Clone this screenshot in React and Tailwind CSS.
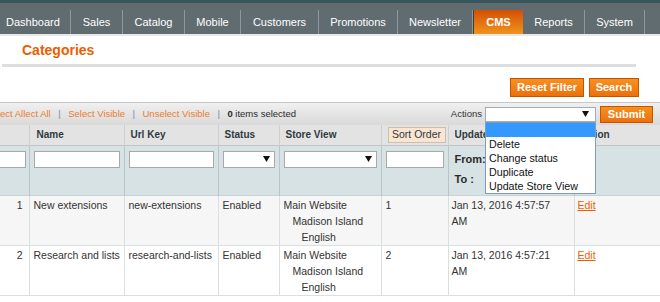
import React from 'react';

const navItems = [
  { label: 'Dashboard', w: 'w-[71px] justify-start pl-[6px] border-r' },
  { label: 'Sales', w: 'w-[52px] justify-center border-r' },
  { label: 'Catalog', w: 'w-[62px] justify-center border-r' },
  { label: 'Mobile', w: 'w-[56px] justify-center border-r' },
  { label: 'Customers', w: 'w-[78px] justify-center border-r' },
  { label: 'Promotions', w: 'w-[79px] justify-center border-r' },
  { label: 'Newsletter', w: 'w-[75px] justify-center border-r' },
  { label: 'CMS', w: 'w-[50px] justify-center', active: true },
  { label: 'Reports', w: 'w-[62px] justify-center border-r' },
  { label: 'System', w: 'w-[60px] justify-center border-r' },
];

const rows = [
  { id: 1, name: 'New extensions', key: 'new-extensions', sort: 1, date: 'Jan 13, 2016 4:57:57' },
  { id: 2, name: 'Research and lists', key: 'research-and-lists', sort: 2, date: 'Jan 13, 2016 4:57:21' },
];

const Arrow = () => (
  <svg width="7" height="6" viewBox="0 0 7 6" className="shrink-0">
    <path d="M0 0h7L3.5 6z" fill="#111" />
  </svg>
);

const FakeSelect = ({ className = '' }) => (
  <div className={`flex h-[17px] items-center justify-end border border-[#a9a9a9] bg-white pr-[4px] ${className}`}>
    <Arrow />
  </div>
);

const Sep = () => <span className="mx-[7.5px] text-[#6f8ea0]">|</span>;

const App = () => {
  return (
    <div className="relative h-[302px] w-[660px] overflow-hidden bg-white font-['Liberation_Sans',Arial,sans-serif]">
      {/* top nav */}
      <div className="h-[3px] bg-[#38555a]" />
      <div className="flex h-[31px] bg-[#616c71] pt-[7px]">
        {navItems.map((item) => (
          <div
            key={item.label}
            className={`flex h-[24px] items-center border-[#8e989c] text-[11px] text-white ${item.w} ${
              item.active
                ? 'bg-gradient-to-b from-[#d24e04] to-[#f1931c] font-bold border-l border-l-[#3d3d3d]'
                : ''
            }`}
          >
            {item.label}
          </div>
        ))}
      </div>
      <div className="h-[2px] bg-[#e8e8e8]" />

      {/* title */}
      <div className="flex h-[28px] items-center pl-[22px] text-[14px] font-bold text-[#eb5e00]">
        Categories
      </div>
      <div className="ml-[2px] h-[3px] w-[634px] bg-[#dedede]" />

      {/* filter buttons */}
      <div className="flex h-[35px] justify-end gap-[5px] pr-[21px] pt-[11px]">
        <button className="flex h-[19px] w-[74px] items-center justify-center border border-[#c65400] bg-gradient-to-b from-[#f5911f] to-[#ec700c] text-[11px] font-bold text-white">
          Reset Filter
        </button>
        <button className="flex h-[19px] w-[50px] items-center justify-center border border-[#c65400] bg-gradient-to-b from-[#f5911f] to-[#ec700c] text-[11px] font-bold text-white">
          Search
        </button>
      </div>

      {/* massaction toolbar */}
      <div className="flex h-[23px] items-center whitespace-nowrap border-t border-[#c8c8c8] bg-gradient-to-b from-[#f0f0f0] to-[#d9d9d9] text-[9.5px]">
        <div className="flex items-center text-[#ee7b2c]">
          <span>ect Allect All</span>
          <Sep />
          <span>Select Visible</span>
          <Sep />
          <span>Unselect Visible</span>
          <Sep />
          <span className="text-[#2b2b2b]">
            <b>0</b> items selected
          </span>
        </div>
        <div className="ml-auto flex items-center pr-[7px]">
          <span className="mr-[3px] text-[#333]">Actions</span>
          <div className="relative w-[111px]">
            <div className="flex h-[15px] items-center justify-end border border-[#a5acb2] bg-white pr-[6px]">
              <Arrow />
            </div>
            <div className="absolute left-0 top-full z-10 w-full border border-[#7f9db9] bg-white text-[10.7px] leading-[14px] text-[#111]">
              <div className="h-[14px] bg-[#3399ff]" />
              <div className="pl-[3px]">Delete</div>
              <div className="pl-[3px]">Change status</div>
              <div className="pl-[3px]">Duplicate</div>
              <div className="pl-[3px]">Update Store View</div>
            </div>
          </div>
          <button className="ml-[4px] flex h-[17px] w-[53px] items-center justify-center border border-[#c65400] bg-gradient-to-b from-[#f5911f] to-[#ec700c] text-[11px] font-bold text-white">
            Submit
          </button>
        </div>
      </div>

      {/* grid */}
      <table className="w-[660px] table-fixed border-collapse">
        <colgroup>
          <col className="w-[29px]" />
          <col className="w-[95px]" />
          <col className="w-[94px]" />
          <col className="w-[61px]" />
          <col className="w-[102px]" />
          <col className="w-[67px]" />
          <col className="w-[126px]" />
          <col className="w-[86px]" />
        </colgroup>
        <thead>
          <tr className="h-[20px] border-b border-[#c3c3c3] bg-[#e3e3e3] text-left text-[10px] font-bold text-[#2f3a3f]">
            <th className="border-r border-[#cfcfcf]" />
            <th className="border-r border-[#cfcfcf] px-[7px]">Name</th>
            <th className="border-r border-[#cfcfcf] px-[6px]">Url Key</th>
            <th className="border-r border-[#cfcfcf] px-[6px]">Status</th>
            <th className="border-r border-[#cfcfcf] px-[6px] whitespace-nowrap">Store View</th>
            <th className="border-r border-[#cfcfcf] p-0">
              <div className="ml-[6px] mr-[2px] flex h-[16px] items-center justify-center border border-[#cbbfb3] bg-[#f9e5d2] text-[10.5px] font-normal text-[#2f3a3f]">
                Sort Order
              </div>
            </th>
            <th className="border-r border-[#cfcfcf] px-[6px]">
              <div className="w-[31px] overflow-hidden whitespace-nowrap">Updated At</div>
            </th>
            <th className="px-[4px]">Action</th>
          </tr>
        </thead>
        <tbody>
          <tr className="h-[50px] border-b border-[#c9d2d4] bg-[#d7e2e5] align-top">
            <td className="border-r border-[#b9c5c8] p-0 pt-[5px]">
              <div className="overflow-hidden pr-[3px]">
                <div className="-ml-[2px] h-[17px] border border-[#a9a9a9] bg-white" />
              </div>
            </td>
            <td className="border-r border-[#b9c5c8] px-[4px] pt-[5px]">
              <div className="h-[17px] border border-[#a9a9a9] bg-white" />
            </td>
            <td className="border-r border-[#b9c5c8] px-[4px] pt-[5px]">
              <div className="h-[17px] border border-[#a9a9a9] bg-white" />
            </td>
            <td className="border-r border-[#b9c5c8] px-[4px] pt-[5px]">
              <FakeSelect />
            </td>
            <td className="border-r border-[#b9c5c8] px-[4px] pt-[5px]">
              <FakeSelect />
            </td>
            <td className="border-r border-[#b9c5c8] px-[4px] pt-[5px]">
              <div className="h-[17px] border border-[#a9a9a9] bg-white" />
            </td>
            <td className="border-r border-[#b9c5c8] px-[6px] pt-[5px]">
              <div className="flex flex-col gap-[3px] text-[11px] font-bold text-[#2b2b2b]">
                <div className="flex h-[17px] items-center gap-[4px]">
                  <span className="w-[32px]">From:</span>
                  <div className="h-[17px] w-[70px] border border-[#a9a9a9] bg-white" />
                </div>
                <div className="flex h-[17px] items-center gap-[4px]">
                  <span className="w-[32px]">To :</span>
                  <div className="h-[17px] w-[70px] border border-[#a9a9a9] bg-white" />
                </div>
              </div>
            </td>
            <td />
          </tr>
          {rows.map((r, i) => (
            <tr
              key={r.id}
              className={`border-b border-[#dadfe0] align-top text-[10.5px] leading-[16px] text-[#333] ${
                i === 0 ? 'bg-[#f6f6f6]' : 'bg-white'
              }`}
            >
              <td className="border-r border-[#dadfe0] pb-[2px] pr-[6px] pt-[1px] text-right">{r.id}</td>
              <td className="border-r border-[#dadfe0] px-[4px] pt-[1px] whitespace-nowrap">{r.name}</td>
              <td className="border-r border-[#dadfe0] px-[4px] pt-[1px] whitespace-nowrap">{r.key}</td>
              <td className="border-r border-[#dadfe0] px-[4px] pt-[1px]">Enabled</td>
              <td className="border-r border-[#dadfe0] px-[4px] pt-[1px] whitespace-nowrap">
                <div>Main Website</div>
                <div className="pl-[9px]">Madison Island</div>
                <div className="pl-[18px]">English</div>
              </td>
              <td className="border-r border-[#dadfe0] px-[4px] pt-[1px]">{r.sort}</td>
              <td className="border-r border-[#dadfe0] px-[3px] pt-[1px] whitespace-nowrap">
                {r.date}
                <br />
                AM
              </td>
              <td className="px-[3px] pt-[1px]">
                <span className="text-[#eb5e00] underline">Edit</span>
              </td>
            </tr>
          ))}
        </tbody>
      </table>
    </div>
  );
};

export default App;
